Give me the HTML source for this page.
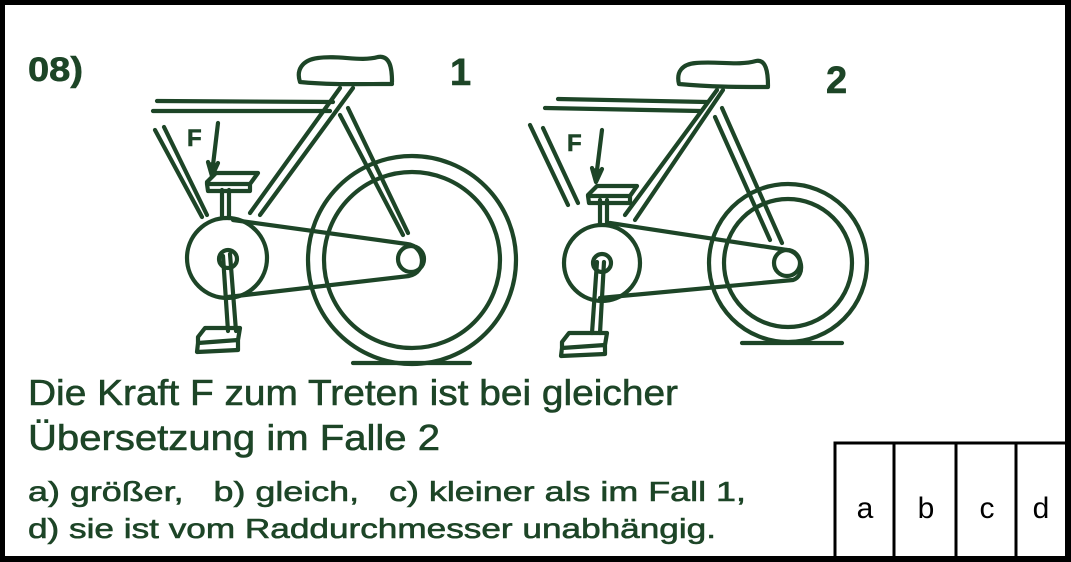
<!DOCTYPE html>
<html><head><meta charset="utf-8"><style>
html,body{margin:0;padding:0;background:#fff;}
svg{display:block}
</style></head><body>
<svg width="1071" height="562" viewBox="0 0 1071 562" xmlns="http://www.w3.org/2000/svg">
<rect x="0" y="0" width="1071" height="562" fill="#fff"/>
<g fill="none" stroke="#1d4527" stroke-width="4.2" stroke-linecap="round" stroke-linejoin="round">
<!-- Bike 1 -->
<path d="M300,82 C296,70 302,60 318,58 C340,55 360,62 378,57 C390,55 392,68 392,82 M300,82 C330,85 360,84 392,84"/>
<path d="M157,101 L333,102 M153,111 L330,111"/>
<path d="M340,88 L250,213 M353,88 L260,215"/>
<path d="M340,115 L403,235 M348,108 L408,233"/>
<path d="M155,130 L202,217 M164,127 L207,215"/>
<circle cx="227" cy="258" r="40"/>
<circle cx="228" cy="259" r="9"/>
<circle cx="411" cy="259" r="13"/>
<path d="M233,220 L407,244 M228,297 L409,276 M407,244 C425,246 428,272 409,276"/>
<circle cx="412" cy="260" r="104"/>
<circle cx="412" cy="260" r="88"/>
<path d="M353,363 L470,363"/>
<path d="M222,190 L222,218 M229,190 L229,218"/>
<path d="M207,182 L216,173 L258,173 L250,184 L207,184 Z M207,184 L208,191 L250,191 L250,184"/>
<path d="M223,256 L228,331 M230,254 L236,331"/>
<path d="M198,337 L205,328 L240,328 L238,340 L198,343 Z M198,343 L197,352 L238,350 L238,340"/>
<path d="M218,123 L213,165"/>
<path d="M208,162 L212,176 L218,163" fill="#1d4527"/>
<!-- Bike 2 -->
<path d="M679,84 C676,72 682,64 696,63 C718,61 738,66 756,61 C766,59 768,72 768,86 M679,84 C710,87 740,87 768,87"/>
<path d="M558,99 L707,102 M545,108 L700,111"/>
<path d="M717,90 L625,215 M723,90 L635,220"/>
<path d="M715,117 L770,240 M722,108 L782,243"/>
<path d="M530,125 L568,205 M543,128 L578,203"/>
<circle cx="602" cy="263" r="38"/>
<circle cx="602" cy="263" r="9"/>
<circle cx="787" cy="263" r="13"/>
<path d="M610,223 L787,250 M600,298 L793,280 M787,250 C803,252 806,276 793,280"/>
<circle cx="788" cy="263" r="79"/>
<circle cx="788" cy="263" r="64"/>
<path d="M742,343 L842,343"/>
<path d="M600,200 L600,223 M607,200 L607,223"/>
<path d="M588,195 L597,186 L637,186 L630,196 L588,196 Z M588,196 L589,203 L630,203 L630,196"/>
<path d="M597,262 L592,333 M604,262 L600,333"/>
<path d="M562,342 L569,333 L607,333 L605,345 L562,348 Z M562,348 L561,356 L605,354 L605,345"/>
<path d="M602,130 L597,170"/>
<path d="M592,168 L596,182 L602,169" fill="#1d4527"/>
</g>
<g fill="#1d4527" stroke="#1d4527" stroke-width="0.6" font-family="Liberation Sans, sans-serif">
<text x="28" y="81" font-size="34" font-weight="bold" textLength="55" lengthAdjust="spacingAndGlyphs">08)</text>
<text x="450" y="85" font-size="38" font-weight="bold">1</text>
<text x="826" y="93" font-size="38" font-weight="bold">2</text>
<text x="187" y="146" font-size="24" font-weight="bold">F</text>
<text x="567" y="151" font-size="24" font-weight="bold">F</text>
<text x="28" y="405" font-size="36" textLength="650" lengthAdjust="spacingAndGlyphs">Die Kraft F zum Treten ist bei gleicher</text>
<text x="28" y="450" font-size="36" textLength="412" lengthAdjust="spacingAndGlyphs">Übersetzung im Falle 2</text>
<text x="28" y="501" font-size="28" textLength="718" lengthAdjust="spacingAndGlyphs" xml:space="preserve">a) größer,   b) gleich,   c) kleiner als im Fall 1,</text>
<text x="28" y="538" font-size="28" textLength="688" lengthAdjust="spacingAndGlyphs">d) sie ist vom Raddurchmesser unabhängig.</text>
</g>
<!-- table -->
<g fill="none" stroke="#000" stroke-width="3">
<path d="M835,556 L835,443 L1066,443 M894,443 L894,556 M956,443 L956,556 M1016,443 L1016,556"/>
</g>
<g fill="#000" font-family="Liberation Sans, sans-serif" font-size="30" text-anchor="middle">
<text x="865" y="518">a</text><text x="926" y="518">b</text><text x="987" y="518">c</text><text x="1041" y="518">d</text>
</g>
<!-- border -->
<rect x="0" y="0" width="1071" height="5" fill="#000"/>
<rect x="0" y="0" width="5" height="562" fill="#000"/>
<rect x="1065" y="0" width="6" height="562" fill="#000"/>
<rect x="0" y="556" width="1071" height="6" fill="#000"/>
</svg>
</body></html>
